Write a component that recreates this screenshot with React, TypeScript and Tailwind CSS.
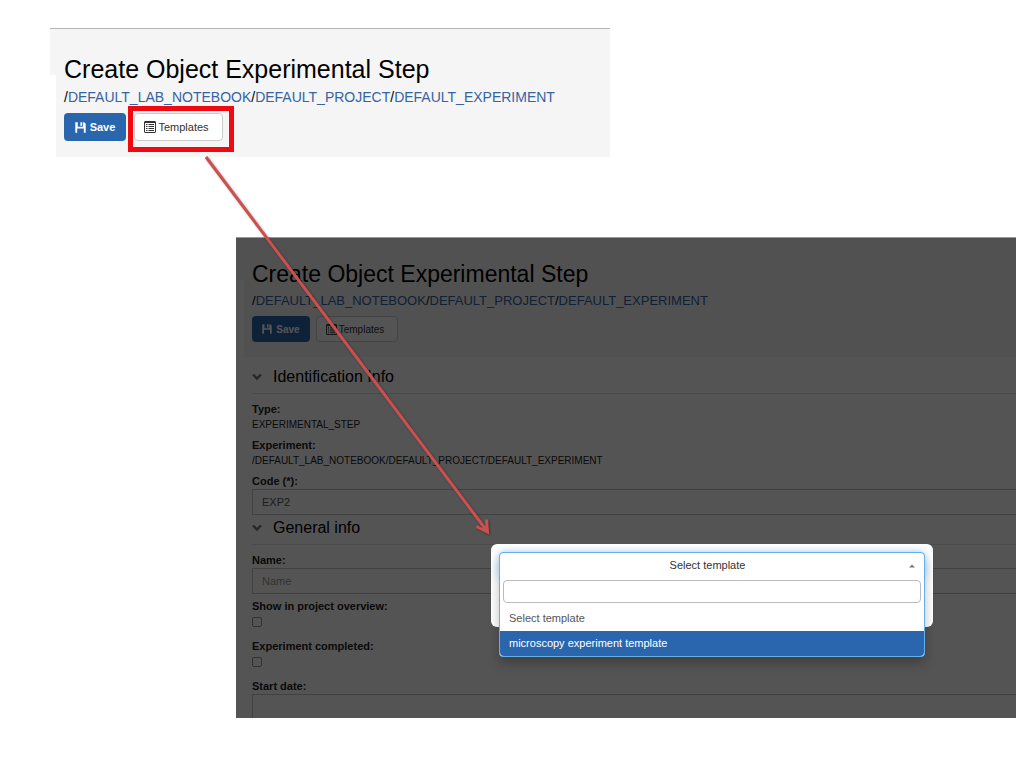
import type { ReactNode } from "react";

function SaveIcon({ className }: { className: string }) {
  return (
    <svg viewBox="0 0 12 12" className={className} fill="currentColor" aria-hidden="true">
      <path d="M0.3 0.3H3V5.2H8.8V0.3H10L11.7 2V11.7H9.6V7H2.4V11.7H0.3Z" />
      <path d="M5.9 0.3H7.9V4.2H5.9Z" />
    </svg>
  );
}

function ListIcon({ className }: { className: string }) {
  return (
    <svg viewBox="0 0 12 12" className={className} fill="none" stroke="currentColor" aria-hidden="true">
      <rect x="0.5" y="0.5" width="11" height="11" rx="0.5" />
      <path d="M1 1.3H11" strokeWidth="1.4" />
      <path d="M2 3.5H3.5M2 5.5H3.5M2 7.5H3.5M2 9.5H3.5M4.5 3.5H10M4.5 5.5H10M4.5 7.5H10M4.5 9.5H10" />
    </svg>
  );
}

function Chevron() {
  return (
    <svg viewBox="0 0 10 8" className="h-2 w-2.5 text-[#777]" fill="none" stroke="currentColor" strokeWidth="2.4" aria-hidden="true">
      <path d="M1 1.5L5 5.5L9 1.5" />
    </svg>
  );
}

function Breadcrumb({ className }: { className: string }) {
  const parts = ["DEFAULT_LAB_NOTEBOOK", "DEFAULT_PROJECT", "DEFAULT_EXPERIMENT"];
  return (
    <nav aria-label="Path" className={className}>
      {parts.map((part) => (
        <span key={part}>
          /
          <a href="#" className="text-[#3563a4]">
            {part}
          </a>
        </span>
      ))}
    </nav>
  );
}

function Section({ title, children }: { title: string; children: ReactNode }) {
  return (
    <section>
      <h2 className="flex h-[30px] items-center gap-[11px] border-b border-[#e0e0e0] pb-[3px] text-base text-black">
        <Chevron />
        {title}
      </h2>
      <div className="flex flex-col pt-[7px]">{children}</div>
    </section>
  );
}

const label = "text-[11px] leading-4 font-bold";
const input = "block h-[26px] w-full border border-r-0 border-[#c4c4c4] bg-white px-[9px] text-[11px] text-[#555] placeholder:text-[#999]";
const check = "mt-[3px] mb-[5px] block size-2.5 appearance-none rounded-xs border border-[#999] bg-white";

export default function App() {
  return (
    <main className="relative min-h-screen overflow-hidden bg-white pt-7 pr-2 pb-12 font-['Liberation_Sans',Arial,sans-serif] text-black">
      <section className="ml-[50px] flex w-[560px] max-w-full border-t border-[#b5b5b5]">
        <div className="h-[46px] w-1.5 bg-[#f5f5f5]" />
        <header className="grow bg-[#f5f5f5] px-2 pt-6 pb-4">
          <h1 className="text-[25px] leading-8">Create Object Experimental Step</h1>
          <Breadcrumb className="text-sm leading-6" />
          <div className="mt-1 flex gap-2">
            <button className="flex h-7 w-[62px] items-center justify-center gap-1 rounded-sm bg-[#2a66ad] text-[11px] font-bold text-white">
              <SaveIcon className="size-[11px]" />
              Save
            </button>
            <div className="relative">
              <button className="flex h-7 w-[89px] items-center justify-center gap-0.5 rounded-sm border border-[#ccc] bg-white pr-1 text-[11px] text-[#333]">
                <ListIcon className="size-3" />
                Templates
              </button>
              <div className="pointer-events-none absolute -top-[7px] -right-[11px] -bottom-[11px] -left-[6px] border-[5px] border-[#ee0a10]" />
            </div>
          </div>
        </header>
      </section>

      <section className="relative mt-20 ml-[236px] border-t border-[#999] text-[#222]">
        <div className="flex">
          <div className="h-[42px] w-2 bg-[#f5f5f5]" />
          <header className="grow bg-[#f5f5f5] px-2 pt-[22px] pb-[15px] text-black">
            <h1 className="text-[23px] leading-7">Create Object Experimental Step</h1>
            <Breadcrumb className="text-[13px] leading-[26px]" />
            <div className="mt-0.5 flex gap-1.5">
              <button className="flex h-[26px] w-[58px] items-center justify-center gap-1 rounded-sm bg-[#2a66ad] text-[10px] font-bold text-white">
                <SaveIcon className="size-2.5" />
                Save
              </button>
              <button className="flex h-[26px] w-[82px] items-center justify-center gap-0.5 rounded-sm border border-[#ccc] bg-white pr-1 text-[10px] text-[#333]">
                <ListIcon className="size-[11px]" />
                Templates
              </button>
            </div>
          </header>
        </div>

        <form className="pt-[7px] pl-4">
          <Section title="Identification Info">
            <dl className="text-[10px]">
              <dt className={label}>Type:</dt>
              <dd className="mb-1 leading-4">EXPERIMENTAL_STEP</dd>
              <dt className={label}>Experiment:</dt>
              <dd className="mb-1 leading-4">/DEFAULT_LAB_NOTEBOOK/DEFAULT_PROJECT/DEFAULT_EXPERIMENT</dd>
            </dl>
            <label htmlFor="code" className={label}>Code (*):</label>
            <input id="code" defaultValue="EXP2" className={input} />
          </Section>
          <Section title="General info">
            <label htmlFor="name" className={label}>Name:</label>
            <input id="name" placeholder="Name" className={input} />
            <label htmlFor="overview" className={`${label} mt-1`}>Show in project overview:</label>
            <input id="overview" type="checkbox" className={check} />
            <label htmlFor="completed" className={`${label} mt-1.5`}>Experiment completed:</label>
            <input id="completed" type="checkbox" className={check} />
            <label htmlFor="start" className={`${label} mt-1.5`}>Start date:</label>
            <input id="start" className="block h-6 w-full border border-r-0 border-b-0 border-[#c4c4c4] bg-white px-2" />
          </Section>
        </form>

        <div className="absolute inset-0 bg-black/67" />

        <div role="dialog" aria-label="Select template" className="absolute top-[306px] left-[255px] h-[83px] w-[442px] rounded-md bg-white p-2 text-[11px] text-[#333]">
          <div className="rounded-sm border border-[#66afe9] bg-white shadow-[0_6px_12px_rgba(0,0,0,0.25)]">
            <button aria-expanded="true" className="flex h-[25px] w-full items-center rounded-t-sm pr-[9px] pl-1.5 shadow-[0_0_8px_rgba(102,175,233,0.7)]">
              <span className="grow text-center">Select template</span>
              <svg viewBox="0 0 6 4" className="h-1 w-1.5" fill="#777" aria-hidden="true">
                <path d="M0 3.5L3 0.5L6 3.5Z" />
              </svg>
            </button>
            <div className="relative rounded-b-sm bg-white">
              <div className="px-[3px] pt-0.5">
                <input aria-label="Search templates" className="block h-[23px] w-full rounded-sm border border-[#bbb] bg-white px-2" />
              </div>
              <ul role="listbox" aria-label="Templates" className="pt-[3px]">
                <li role="option" aria-selected="false" className="flex h-[25px] items-center px-[9px] text-[#555]">Select template</li>
                <li role="option" aria-selected="true" className="flex h-[25px] items-center rounded-b-sm bg-[#2a66ad] px-[9px] text-white">microscopy experiment template</li>
              </ul>
            </div>
          </div>
        </div>
      </section>

      <svg viewBox="0 0 300 390" className="pointer-events-none absolute top-[150px] left-[200px] h-[390px] w-[300px] drop-shadow-[1px_1px_1px_rgba(0,0,0,0.35)]" fill="none" stroke="#cb504e" strokeWidth="3" aria-hidden="true">
        <path d="M6 7L287 381M276.5 376.5L287.5 382L286.5 369.5" />
      </svg>
    </main>
  );
}
